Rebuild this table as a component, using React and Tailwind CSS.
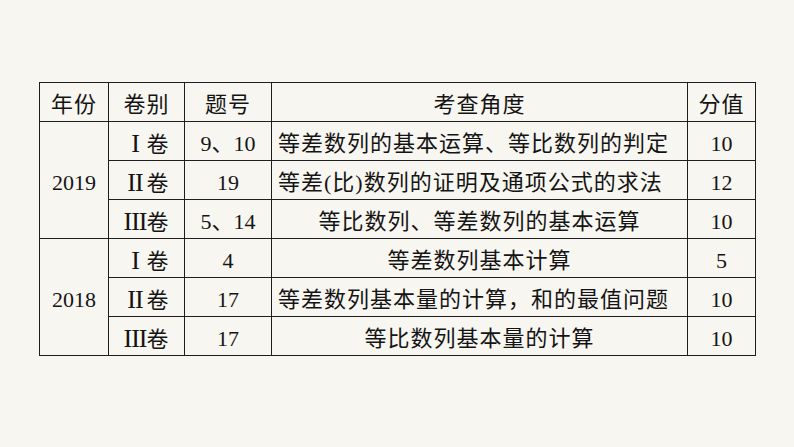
import React from "react";

const font = { fontFamily: '"Liberation Serif", "Noto Sans CJK SC", serif' };

function Juan({ n }) {
  return (
    <span className="inline-flex items-baseline">
      <span className="inline-block w-[23px] text-center text-[26px] leading-[30px] tracking-[-1px]">{n}</span>
      <span>卷</span>
    </span>
  );
}

const rows = [
  { year: "2019", span: 3, juan: "I", no: "9、10", text: "等差数列的基本运算、等比数列的判定", left: true, score: "10" },
  { juan: "II", no: "19", text: "等差(比)数列的证明及通项公式的求法", left: true, score: "12" },
  { juan: "III", no: "5、14", text: "等比数列、等差数列的基本运算", score: "10" },
  { year: "2018", span: 3, juan: "I", no: "4", text: "等差数列基本计算", score: "5" },
  { juan: "II", no: "17", text: "等差数列基本量的计算，和的最值问题", left: true, score: "10" },
  { juan: "III", no: "17", text: "等比数列基本量的计算", score: "10" },
];

const cell = "border border-[#1e1e1e] h-[39px] p-0 align-middle";
const inner = "pt-[6px] leading-[30px]";

export default function App() {
  return (
    <div className="w-[794px] h-[447px] bg-[#f8f6f0] text-[#141414] pt-[82px] pl-[39px]" style={font}>
      <table className="border-collapse table-fixed w-[716px] text-[22px]">
        <colgroup>
          <col className="w-[69px]" />
          <col className="w-[76px]" />
          <col className="w-[87px]" />
          <col className="w-[416px]" />
          <col className="w-[68px]" />
        </colgroup>
        <thead>
          <tr>
            {["年份", "卷别", "题号", "考查角度", "分值"].map((h) => (
              <th key={h} className={cell + " font-normal"}>
                <div className={inner + " text-center tracking-[1px]"}>{h}</div>
              </th>
            ))}
          </tr>
        </thead>
        <tbody>
          {rows.map((r, i) => (
            <tr key={i}>
              {r.year && (
                <td rowSpan={r.span} className={cell}>
                  <div className={inner + " text-center"}>{r.year}</div>
                </td>
              )}
              <td className={cell}>
                <div className={inner + " text-center tracking-[1px]"}>
                  <Juan n={r.juan} />
                </div>
              </td>
              <td className={cell}>
                <div className={inner + " text-center"}>{r.no}</div>
              </td>
              <td className={cell}>
                <div className={inner + " tracking-[1px] whitespace-nowrap " + (r.left ? "text-left pl-[6px]" : "text-center")}>
                  {r.text}
                </div>
              </td>
              <td className={cell}>
                <div className={inner + " text-center"}>{r.score}</div>
              </td>
            </tr>
          ))}
        </tbody>
      </table>
    </div>
  );
}
